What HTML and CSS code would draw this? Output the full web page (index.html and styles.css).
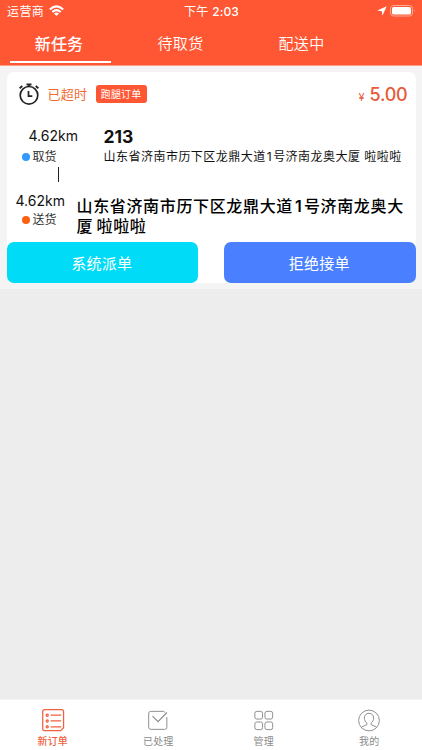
FILE: index.html
```html
<!DOCTYPE html>
<html lang="zh-CN">
<head>
<meta charset="utf-8">
<meta name="viewport" content="width=device-width">
<title>新任务</title>
<link rel="stylesheet" href="styles.css">
</head>
<body>
<header class="header">
  <div class="status">
    <div class="carrier"><span>运营商</span>
      <svg width="15" height="12" viewBox="0 0 15 12" fill="none" stroke="#fff" stroke-width="2"><path d="M.8 4.4Q7.5-1.6 14.2 4.4M3.3 7Q7.5 3.3 11.7 7"/><path d="M5 8.4Q7.5 6.6 10 8.4L7.5 11Z" fill="#fff" stroke="none"/></svg>
    </div>
    <div class="time">下午 <b>2:03</b></div>
    <div class="power">
      <svg width="10" height="10" viewBox="0 0 10 10"><path d="M9.7.3 5.4 9.8 4.8 5.2.2 4.6Z" fill="#fff"/></svg>
      <svg width="26" height="12" viewBox="0 0 26 12"><rect x=".5" y=".5" width="22" height="10.5" rx="3" fill="none" stroke="#ffac98"/><rect x="2" y="2" width="19" height="7.5" rx="1.6" fill="#fff"/><path d="M24 4q1.4 1.8 0 3.6Z" fill="#ffac98"/></svg>
    </div>
  </div>
  <nav class="tabs">
    <div class="tab active">新任务</div>
    <div class="tab">待取货</div>
    <div class="tab">配送中</div>
  </nav>
</header>
<main class="list">
  <article class="card">
    <div class="summary">
      <svg class="clock" width="22" height="22" viewBox="0 0 22 22" fill="none" stroke="#242424" stroke-width="1.7"><circle cx="11" cy="12.3" r="8.8"/><path d="M10.5 8v5.2h3.8M11 1.2v2.3" /><path d="M8.5 1.5h5" stroke-width="2"/><path d="M1.6 5.2 4.3 3M17.7 3l2.7 2.2" stroke-width="1.8"/></svg>
      <span class="late">已超时</span>
      <span class="tag">跑腿订单</span>
      <span class="price"><small>¥</small>5.00</span>
    </div>
    <div class="stop pickup">
      <div class="leg"><div class="distance">4.62km</div><div class="kind"><i class="dot"></i>取货</div></div>
      <div class="place"><div class="number">213</div><div class="address">山东省济南市历下区龙鼎大道<span class="digit">1</span>号济南龙奥大厦 啦啦啦</div></div>
    </div>
    <div class="connector"></div>
    <div class="stop delivery">
      <div class="leg"><div class="distance">4.62km</div><div class="kind"><i class="dot"></i>送货</div></div>
      <div class="destination">山东省济南市历下区龙鼎大道<span class="digit">1</span>号济南龙奥大<br>厦 啦啦啦</div>
    </div>
    <div class="actions"><button class="assign">系统派单</button><button class="reject">拒绝接单</button></div>
  </article>
</main>
<footer class="bar">
  <div class="item selected">
    <svg width="26" height="26" viewBox="0 0 26 26" fill="none" stroke="currentColor" stroke-width="1.3"><path d="M4.3 1.8H22q2 0 2 2V20.500l-3 3H4.300q-2 0-2-2V3.800q0-2 2-2Z"/><path d="M10.500 7.500h11M10.500 13.500h11M10.500 19.500h11"/><circle cx="7" cy="7.500" r="1.100"/><circle cx="7" cy="13.500" r="1.100"/><circle cx="7" cy="19.500" r="1.100"/></svg>
    <span>新订单</span>
  </div>
  <div class="item">
    <svg width="26" height="26" viewBox="0 0 26 26" fill="none" stroke="currentColor" stroke-width="1"><path d="M19 3.500H5.500q-2.200 0-2.200 2V20q0 2.200 2.200 2.200H20q2.200 0 2.200-2.200V9.500M19 3.500l1.300 1.200"/><path d="m7.300 8.500 5.700 5.700 9.300-9.500" stroke-width="1.200"/></svg>
    <span>已处理</span>
  </div>
  <div class="item">
    <svg width="26" height="26" viewBox="0 0 26 26" fill="none" stroke="currentColor" stroke-width="1"><rect x="3.500" y="3.500" width="8" height="8" rx="2"/><rect x="14" y="3.500" width="8" height="8" rx="2"/><rect x="3.500" y="14.500" width="8" height="8" rx="2"/><rect x="14" y="14.500" width="8" height="8" rx="2"/></svg>
    <span>管理</span>
  </div>
  <div class="item">
    <svg width="26" height="26" viewBox="0 0 26 26" fill="none" stroke="currentColor" stroke-width="1"><circle cx="13" cy="13" r="10.800"/><path d="M10.800 15.700C9 14.400 8.200 12.600 8.200 10.500c0-3 1.800-5 4.800-5s4.800 2 4.800 5c0 2.100-.8 3.900-2.600 5.200v1.600l5 2.200q.8.500.7 1.300M10.800 15.700v1.600l-5 2.200q-.8.500-.7 1.300"/></svg>
    <span>我的</span>
  </div>
</footer>
</body>
</html>
```
FILE: styles.css
```css
* { box-sizing: border-box; }
body {
  margin: 0;
  height: 750px;
  display: flex;
  flex-direction: column;
  overflow: hidden;
  background: #ededed;
  color: #111;
  font-family: Inter, "Noto Sans CJK SC", sans-serif;
}
.header {
  height: 66px;
  flex: none;
  background: #ff5633;
  border-bottom: 1px solid #ff9f8b;
  color: #fff;
}
.status {
  height: 22px;
  display: grid;
  grid-template-columns: 1fr auto 1fr;
  align-items: center;
  padding: 0 6px 0 7px;
  font-size: 12px;
  line-height: 20px;
  letter-spacing: .3px;
}
.carrier, .power { display: flex; align-items: center; gap: 5px; }
.carrier span { letter-spacing: .4px; padding-top: 1px; }
.power { justify-content: flex-end; gap: 3px; }
.time { padding-top: 1px; }
.time b { font-weight: 500; letter-spacing: .1px; }
.tabs { display: flex; height: 43px; }
.tab {
  width: 101px;
  height: 41px;
  margin-left: 20px;
  padding-top: 10px;
  line-height: 24px;
  text-align: center;
  font-size: 15px;
  font-weight: 350;
  letter-spacing: .3px;
}
.tab:first-child { margin-left: 10px; }
.tab:nth-child(2) { margin-left: 19px; }
.active { font-size: 16px; font-weight: 500; border-bottom: 2px solid #fff; letter-spacing: .1px; padding-right: 3px; }
.list { height: 223px; flex: none; padding: 6px 6.500px; background: #f4f4f4; }
.card { height: 211px; background: #fff; border-radius: 7px; display: flex; flex-direction: column; }
.summary { height: 44px; display: flex; align-items: center; padding: 0 8px 0 11px; }
.late { margin-left: 8px; font-size: 13px; line-height: 20px; color: #f16b2f; letter-spacing: .2px; }
.tag { margin-left: 8.500px; width: 51px; height: 18px; border-radius: 3px; background: #ff5633; color: #fff; font-size: 10px; line-height: 18px; text-align: center; letter-spacing: .2px; }
.price { margin-left: auto; padding-top: 3px; font-size: 18px; font-weight: 500; line-height: 24px; color: #e65b3c; letter-spacing: -.2px; }
.price small { font-size: 11px; font-weight: 400; margin-right: 5px; }
.stop { display: flex; }
.pickup { height: 51px; padding-top: 9px; }
.leg { width: 70px; flex: none; }
.distance { font-size: 14px; line-height: 21px; }
.pickup .distance { padding-left: 22px; }
.pickup .leg { width: 97px; }
.kind { display: flex; align-items: center; gap: 3px; padding-left: 15px; font-size: 12px; line-height: 21px; color: #333; }
.dot { width: 8px; height: 8px; border-radius: 50%; background: #309aff; }
.number { font-size: 17.500px; font-weight: 700; line-height: 21px; padding-top: 1px; height: 21px; }
.address { font-size: 12px; line-height: 22px; letter-spacing: .48px; white-space: nowrap; }
.digit { margin: 0 1px; }
.connector { width: 1px; height: 15px; margin-left: 51px; background: #222; }
.delivery { height: 60px; padding-top: 8px; }
.delivery .distance { padding-left: 9px; line-height: 21px; }
.delivery .kind { line-height: 18px; }
.delivery .dot { background: #fc6011; }
.destination { padding-top: 6px; font-size: 16px; font-weight: 500; line-height: 20px; letter-spacing: .65px; word-spacing: -1.500px; white-space: nowrap; color: #000; }
.destination .digit { font-weight: 600; margin: 0 1.500px 0 2px; }
.actions { display: flex; justify-content: space-between; height: 41px; }
button { width: 191.500px; height: 41px; border: 0; border-radius: 7px; padding: 0 1px 1px 0; color: #fff; font: 400 15px "Noto Sans CJK SC", sans-serif; letter-spacing: .3px; }
.assign { background: #00dbf8; }
.reject { background: #4a80ff; }
.bar { height: 51px; margin-top: auto; flex: none; display: flex; background: #fff; border-top: 1px solid #f5f5f5; }
.item { flex: 1; display: flex; flex-direction: column; align-items: center; padding-top: 8px; color: #8b8b8b; font-size: 10px; line-height: 17px; letter-spacing: .2px; }
.selected { color: #ef603e; font-weight: 500; }
```
